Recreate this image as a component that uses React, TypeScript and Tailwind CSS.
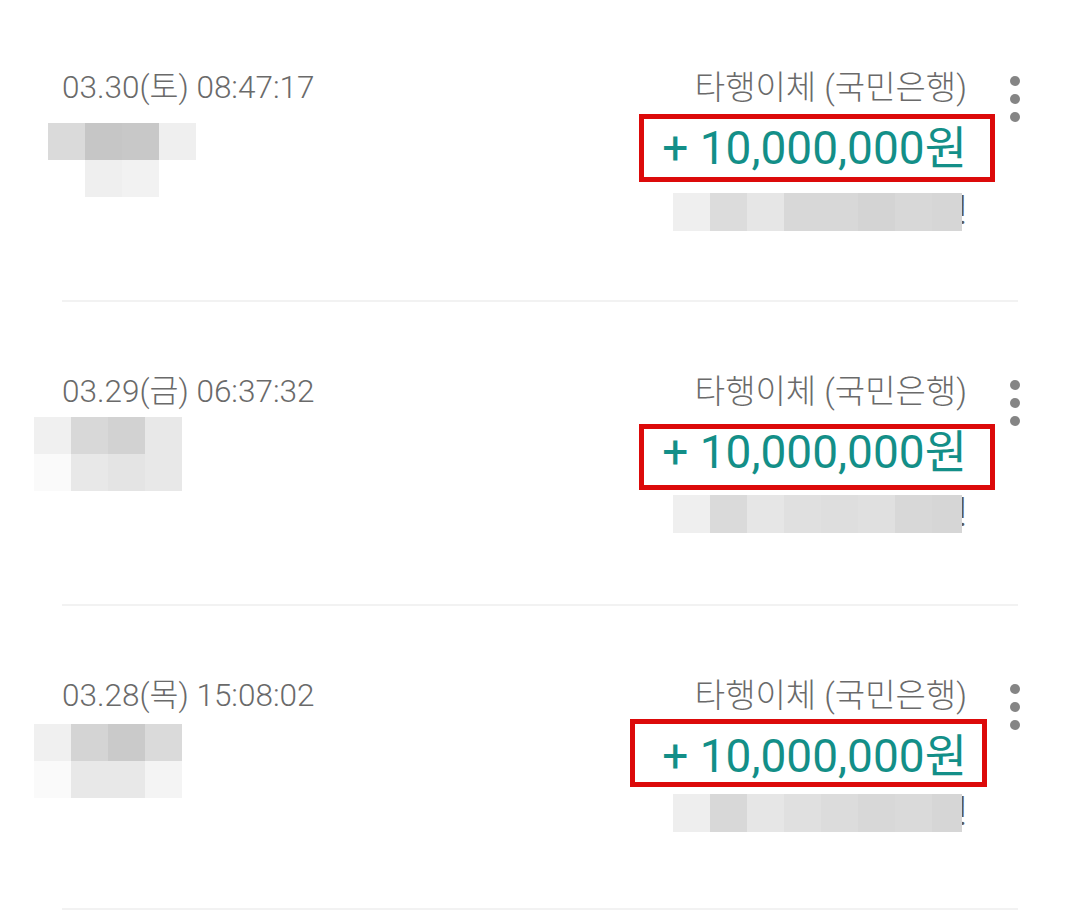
import React from 'react';

type Row = {
  date: string;
  leftMosaic: { top: (string | null)[]; bottom: (string | null)[] };
  leftPos: string;
  rightMosaicPos: string;
  rightCells: string[];
  box: string;
};

const rows: Row[] = [
  {
    date: '03.30(토) 08:47:17',
    leftMosaic: {
      top: ['bg-[#dadada]', 'bg-[#c6c6c6]', 'bg-[#c8c8c8]', 'bg-[#efefef]'],
      bottom: [null, 'bg-[#efefef]', 'bg-[#f2f2f2]', null],
    },
    leftPos: 'mt-[16px] -ml-[14px]',
    rightMosaicPos: 'mt-[19px]',
    rightCells: ['bg-[#efefef]', 'bg-[#dcdcdc]', 'bg-[#e6e6e6]', 'bg-[#d8d8d8]', 'bg-[#d8d8d8]', 'bg-[#d4d4d4]', 'bg-[#d8d8d8]', 'bg-[#d6d6d6]'],
    box: 'left-[639px] top-[116px] w-[356px] h-[68px]',
  },
  {
    date: '03.29(금) 06:37:32',
    leftMosaic: {
      top: ['bg-[#f0f0f0]', 'bg-[#d8d8d8]', 'bg-[#d2d2d2]', 'bg-[#e8e8e8]'],
      bottom: ['bg-[#fafafa]', 'bg-[#e8e8e8]', 'bg-[#e4e4e4]', 'bg-[#e8e8e8]'],
    },
    leftPos: 'mt-[6px] -ml-[28px]',
    rightMosaicPos: 'mt-[17px]',
    rightCells: ['bg-[#efefef]', 'bg-[#dadada]', 'bg-[#e6e6e6]', 'bg-[#e0e0e0]', 'bg-[#dedede]', 'bg-[#e0e0e0]', 'bg-[#d8d8d8]', 'bg-[#d6d6d6]'],
    box: 'left-[639px] top-[122px] w-[356px] h-[66px]',
  },
  {
    date: '03.28(목) 15:08:02',
    leftMosaic: {
      top: ['bg-[#f0f0f0]', 'bg-[#d4d4d4]', 'bg-[#cacaca]', 'bg-[#dadada]'],
      bottom: ['bg-[#fafafa]', 'bg-[#e8e8e8]', 'bg-[#e8e8e8]', 'bg-[#f4f4f4]'],
    },
    leftPos: 'mt-[9px] -ml-[28px]',
    rightMosaicPos: 'mt-[12px]',
    rightCells: ['bg-[#eeeeee]', 'bg-[#d8d8d8]', 'bg-[#e6e6e6]', 'bg-[#e0e0e0]', 'bg-[#dcdcdc]', 'bg-[#d8d8d8]', 'bg-[#dadada]', 'bg-[#d6d6d6]'],
    box: 'left-[630px] top-[113px] w-[357px] h-[68px]',
  },
];

function Kebab() {
  return (
    <div className="flex flex-col gap-[8px] mt-[7px] ml-[43px]">
      <span className="block w-[10px] h-[10px] rounded-full bg-[#858585]" />
      <span className="block w-[10px] h-[10px] rounded-full bg-[#858585]" />
      <span className="block w-[10px] h-[10px] rounded-full bg-[#858585]" />
    </div>
  );
}

function TransferItem({ row }: { row: Row }) {
  return (
    <div className="relative h-[304px] flex flex-col">
      <div className="flex-1 flex justify-between pl-[62px] pr-[60px] pt-[71px]">
        {/* left: time + masked memo */}
        <div className="flex flex-col">
          <div className="text-[31.5px] leading-[38px] font-light text-[#6a6a6a] whitespace-nowrap">{row.date}</div>
          <div className={`flex flex-col ${row.leftPos}`}>
            <div className="flex">
              {row.leftMosaic.top.map((c, i) => (
                <span key={i} className={`block w-[37px] h-[37px] ${c ?? ''}`} />
              ))}
            </div>
            <div className="flex">
              {row.leftMosaic.bottom.map((c, i) => (
                <span key={i} className={`block w-[37px] h-[37px] ${c ?? ''}`} />
              ))}
            </div>
          </div>
        </div>

        {/* right: type, amount, masked balance */}
        <div className="flex items-start">
          <div className="flex flex-col items-end">
            <div className="text-[33px] leading-[38px] font-light text-[#6a6a6a] whitespace-nowrap">타행이체 (국민은행)</div>
            <div className="mt-[16px] text-[46px] leading-[51px] text-[#138f88] whitespace-nowrap">+ 10,000,000원</div>
            <div className={`flex items-start ${row.rightMosaicPos}`}>
              {row.rightCells.map((c, i) => (
                <span key={i} className={`relative z-10 block h-[38px] ${i === 7 ? 'w-[30px]' : 'w-[37px]'} ${c}`} />
              ))}
              <span className="text-[40px] leading-[36px] font-light text-[#5a5a5a] -ml-[4px]">!</span>
            </div>
          </div>
          <Kebab />
        </div>
      </div>
      <div className="mx-[62px] h-[2px] bg-[#f2f2f2]" />

      {/* annotation box */}
      <div className={`absolute border-[5px] border-[#dc0a0a] ${row.box}`} />
    </div>
  );
}

export default function App() {
  return (
    <div className="w-[1080px] h-[913px] overflow-hidden bg-white font-['Roboto','Noto_Sans_CJK_KR',sans-serif]">
      <div className="-mt-[2px]">
        {rows.map((r, i) => (
          <TransferItem key={i} row={r} />
        ))}
      </div>
    </div>
  );
}
